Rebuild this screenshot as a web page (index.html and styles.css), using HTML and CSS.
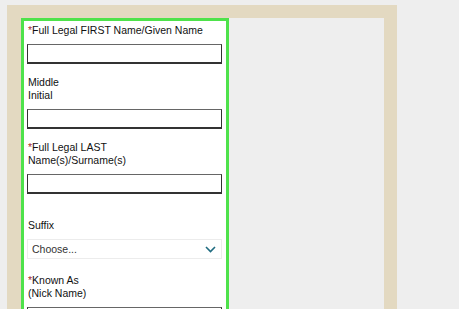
FILE: index.html
```html
<!DOCTYPE html>
<html lang="en">
<head>
  <meta charset="UTF-8" />
  <meta name="viewport" content="width=device-width, initial-scale=1.0"/>
  <title>Name details</title>
  <link rel="stylesheet" href="styles.css">
</head>
<body>

  <div class="frame">
    <form class="panel">
      <!-- Jméno -->
      <label class="lbl" for="firstName"><span class="req">*</span>Full Legal FIRST Name/Given Name</label>
      <input type="text" id="firstName" class="field">

      <label class="lbl" for="middle">Middle<br>Initial</label>
      <input type="text" id="middle" class="field">

      <label class="lbl" for="lastName"><span class="req">*</span>Full Legal LAST<br>Name(s)/Surname(s)</label>
      <input type="text" id="lastName" class="field">

      <label class="lbl lbl-suffix" for="suffix">Suffix</label>
      <div class="select-wrap">
        <select id="suffix" class="select">
          <option>Choose...</option>
          <option>Jr.</option>
          <option>Sr.</option>
        </select>
        <svg class="chevron" width="11" height="7" viewBox="0 0 11 7">
          <path d="M1 1 L5.5 5.5 L10 1" fill="none" stroke="#1f6b80" stroke-width="1.6"/>
        </svg>
      </div>

      <label class="lbl lbl-known" for="known"><span class="req">*</span>Known As<br>(Nick Name)</label>
      <input type="text" id="known" class="field">
    </form>
  </div>

</body>
</html>
```

FILE: styles.css
```css
* {
  margin: 0;
  padding: 0;
  box-sizing: border-box;
}
body, html {
  height: 100%;
  overflow: hidden;
}

body {
  background: #eeeeee;
  font-family: 'Liberation Sans', Arial, sans-serif;
  font-size: 10.5px;
  color: #111;
}

.frame {
  margin: 5px 0 0 7px;
  width: 390px;
  height: 304px;
  overflow: hidden;
  border: solid #e3d9c1;
  border-width: 13px 13px 0 14px;
  background: #eeeeee;
}

.panel {
  width: 208px;
  min-height: 291px;
  border: 3px solid #4ee24b;
  border-bottom: none;
  background: #fff;
  padding: 3px 4px 0 3px;
}

.lbl {
  display: block;
  line-height: 13px;
  padding-left: 1px;
  margin-top: 12px;
}
.lbl:first-child {
  margin-top: 0;
}
.lbl-suffix {
  margin-top: 25px;
}
.lbl-known {
  margin-top: 15px;
}

.req {
  color: #a52a2a;
}

.field {
  display: block;
  width: 195px;
  height: 20px;
  margin-top: 7px;
  border: 1px solid #333;
  border-top-color: #666;
  border-bottom-width: 2px;
  background: #fff;
}

/* Výběr */
.select-wrap {
  position: relative;
  width: 195px;
  margin-top: 7px;
}
.select {
  -webkit-appearance: none;
  appearance: none;
  display: block;
  width: 100%;
  height: 20px;
  border: 1px solid #ececec;
  background: #fff;
  padding-left: 4px;
  font-family: inherit;
  font-size: 10.5px;
  color: #333;
}
.chevron {
  position: absolute;
  right: 6px;
  top: 7px;
  pointer-events: none;
}
```
